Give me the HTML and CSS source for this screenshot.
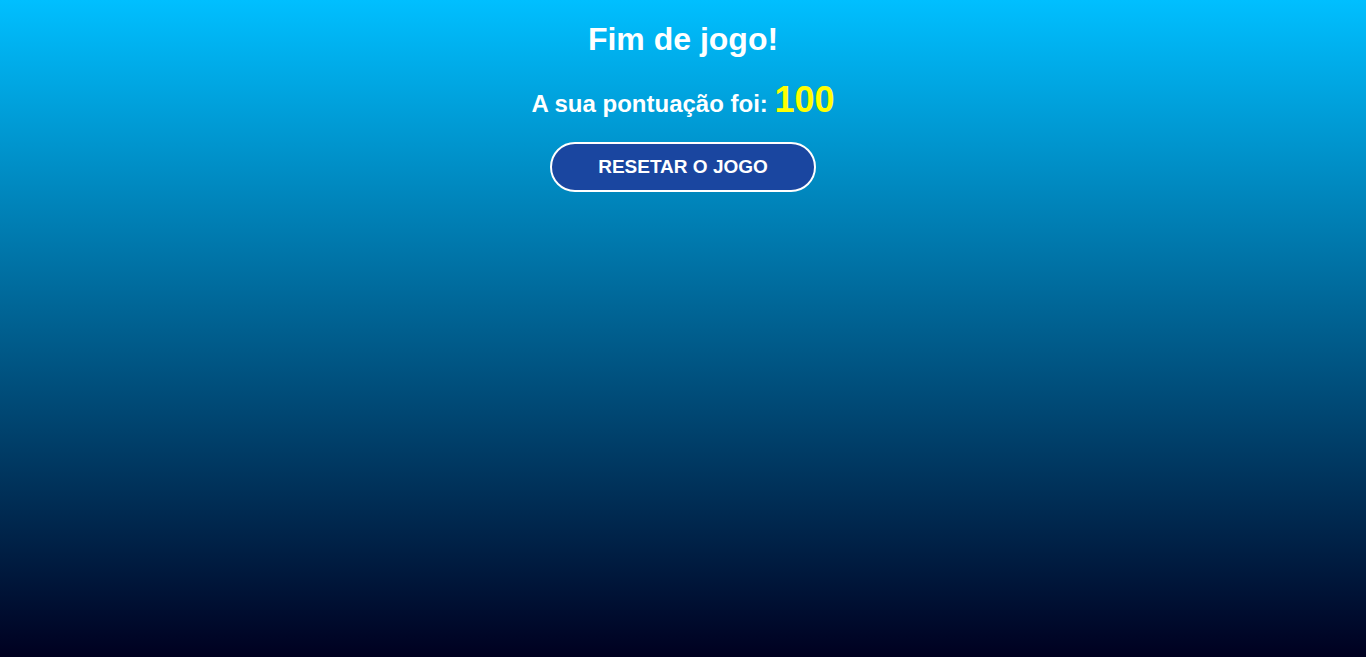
FILE: index.html
```html
<!DOCTYPE html>
<html lang="pt">
<head>
<meta charset="utf-8">
<title>Fim de jogo</title>
<link rel="stylesheet" href="styles.css">
</head>
<body>
<main class="game-over">
  <h1 class="title">Fim de jogo!</h1>
  <h2 class="score">A sua pontuação foi: <span class="score-value">100</span></h2>
  <button class="reset-btn" type="button">RESETAR O JOGO</button>
</main>
</body>
</html>
```

FILE: styles.css
```css
html, body {
  margin: 0;
  height: 100%;
}
body {
  background: linear-gradient(to bottom, #00bfff 0%, #000020 100%);
  font-family: "Liberation Sans", Arial, sans-serif;
  color: #ffffff;
}
.game-over {
  display: flex;
  flex-direction: column;
  align-items: center;
  text-align: center;
}
.title {
  font-size: 32px;
  font-weight: bold;
  margin: 21px 0 21px;
}
.score {
  font-size: 24px;
  font-weight: bold;
  margin: 0 0 21px;
}
.score-value {
  font-size: 36px;
  color: #ffff00;
}
.reset-btn {
  font-family: "Liberation Sans", Arial, sans-serif;
  font-size: 19px;
  font-weight: bold;
  color: #ffffff;
  background: #1a46a0;
  border: 2px solid #ffffff;
  border-radius: 30px;
  padding: 12px 46px;
  line-height: 22px;
  cursor: pointer;
}
```
